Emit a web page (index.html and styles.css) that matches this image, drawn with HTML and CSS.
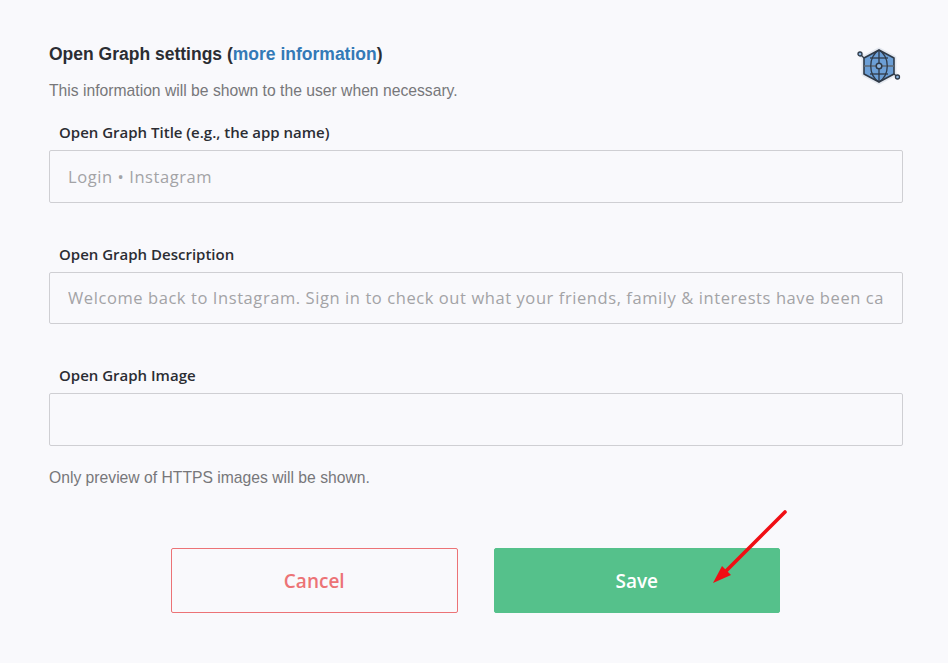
FILE: index.html
```html
<!DOCTYPE html>
<html lang="en">
<head>
<meta charset="utf-8">
<title>Open Graph settings</title>
<link rel="stylesheet" href="styles.css">
</head>
<body>
<main class="page">
  <header class="head">
    <div class="head-text">
      <h2 class="title">Open Graph settings (<a class="link" href="#">more information</a>)</h2>
      <p class="note">This information will be shown to the user when necessary.</p>
    </div>
    <svg class="og-icon" width="46" height="38" viewBox="0 0 46 38" aria-hidden="true">
      <g fill="none" stroke="#e4e8ef" stroke-width="5" stroke-linejoin="round" stroke-linecap="round">
        <path d="M23 3 L38 11 L38 27 L23 35 L8 27 L8 11 Z" fill="#e4e8ef"/>
        <path d="M4 7 L8 11"/>
        <path d="M38 27 L41.5 30"/>
      </g>
      <path d="M23 3 L38 11 L38 27 L23 35 L8 27 L8 11 Z" fill="#6c9fd6" stroke="#2f3a48" stroke-width="1.6" stroke-linejoin="round"/>
      <g fill="none" stroke="#2f3a48" stroke-width="1.3">
        <path d="M23 3 V35"/>
        <path d="M8 19 H38" stroke="#5f6c7a" stroke-width="1.6"/>
        <path d="M23 3 C12 10 12 28 23 35"/>
        <path d="M23 3 C34 10 34 28 23 35"/>
        <path d="M14 11 H32"/>
        <path d="M14 27 H32"/>
        <circle cx="23" cy="19" r="2.8" fill="#8db5e0" stroke-width="1.5"/>
        <path d="M4 7 L8 11"/>
        <path d="M38 27 L41.5 30"/>
        <circle cx="4" cy="7" r="2" fill="#8db5e0"/>
        <circle cx="41.5" cy="30" r="2" fill="#8db5e0"/>
      </g>
    </svg>
  </header>

  <section class="field">
    <label class="label" for="og-title">Open Graph Title (e.g., the app name)</label>
    <input class="input" id="og-title" type="text" placeholder="Login • Instagram">
  </section>
  <section class="field">
    <label class="label" for="og-desc">Open Graph Description</label>
    <input class="input" id="og-desc" type="text" placeholder="Welcome back to Instagram. Sign in to check out what your friends, family &amp; interests have been capturing &amp; sharing around the world.">
  </section>
  <section class="field field-last">
    <label class="label" for="og-image">Open Graph Image</label>
    <input class="input" id="og-image" type="text">
  </section>
  <p class="note note-bottom">Only preview of HTTPS images will be shown.</p>

  <div class="actions">
    <button class="btn btn-cancel" type="button">Cancel</button>
    <button class="btn btn-save" type="button">Save</button>
    <svg class="arrow" width="90" height="90" viewBox="0 0 90 90" aria-hidden="true">
      <path d="M81 6 L22 65" stroke="#f00e14" stroke-width="3.6" stroke-linecap="round" fill="none"/>
      <path d="M9 77 L18 60 L27 69 Z" fill="#f00e14"/>
    </svg>
  </div>
</main>
</body>
</html>
```

FILE: styles.css
```css
* { box-sizing: border-box; }
html, body { margin: 0; padding: 0; }
body {
  background: #f9f9fc;
  width: 948px;
  height: 663px;
  overflow: hidden;
  font-family: "Liberation Sans", Arial, sans-serif;
}
.page {
  padding: 44px 45px 0 49px;
}
.head {
  display: flex;
  justify-content: space-between;
  align-items: flex-start;
}
.title {
  margin: 0;
  font-size: 17.5px;
  line-height: 20px;
  font-weight: 700;
  color: #2b2d33;
}
.link { color: #337ab7; text-decoration: none; }
.note {
  margin: 17px 0 0;
  font-size: 15.7px;
  line-height: 20px;
  color: #77777a;
}
.og-icon {
  margin: 3px 1px 0 0;
  flex: none;
}
.field {
  display: flex;
  flex-direction: column;
  margin-bottom: 41px;
}
.head + .field { margin-top: 21px; }
.field-last { margin-bottom: 22px; }
.label {
  font-family: "Open Sans", "Noto Sans", sans-serif;
  font-weight: 600;
  font-size: 15px;
  line-height: 20px;
  color: #2b2d33;
  padding-left: 10px;
  margin-bottom: 8px;
}
.input {
  display: block;
  width: 100%;
  height: 52.5px;
  padding: 0 19px 0 18px;
  background: transparent;
  border: 1px solid #cfcfd3;
  border-radius: 2px;
  font-family: "Open Sans", "Noto Sans", sans-serif;
  font-size: 16.5px;
  letter-spacing: 0.58px;
  color: #555;
  outline: none;
}
.input::placeholder { color: #a3a3a6; opacity: 1; }
.note-bottom { margin: 0; }
.actions {
  position: relative;
  display: flex;
  justify-content: center;
  gap: 36px;
  margin-top: 60px;
  padding-right: 1px;
}
.btn {
  width: 286.5px;
  height: 65px;
  padding: 1px 0 0;
  border-radius: 2px;
  font-family: "Open Sans", "Noto Sans", sans-serif;
  font-size: 19px;
  font-weight: 600;
  cursor: pointer;
}
.btn-cancel {
  background: transparent;
  border: 1px solid #ec7376;
  color: #ec7376;
}
.btn-save {
  background: #55c18b;
  border: 1px solid #55c18b;
  color: #fff;
}
.arrow {
  position: absolute;
  left: 655px;
  top: -42px;
}
```
